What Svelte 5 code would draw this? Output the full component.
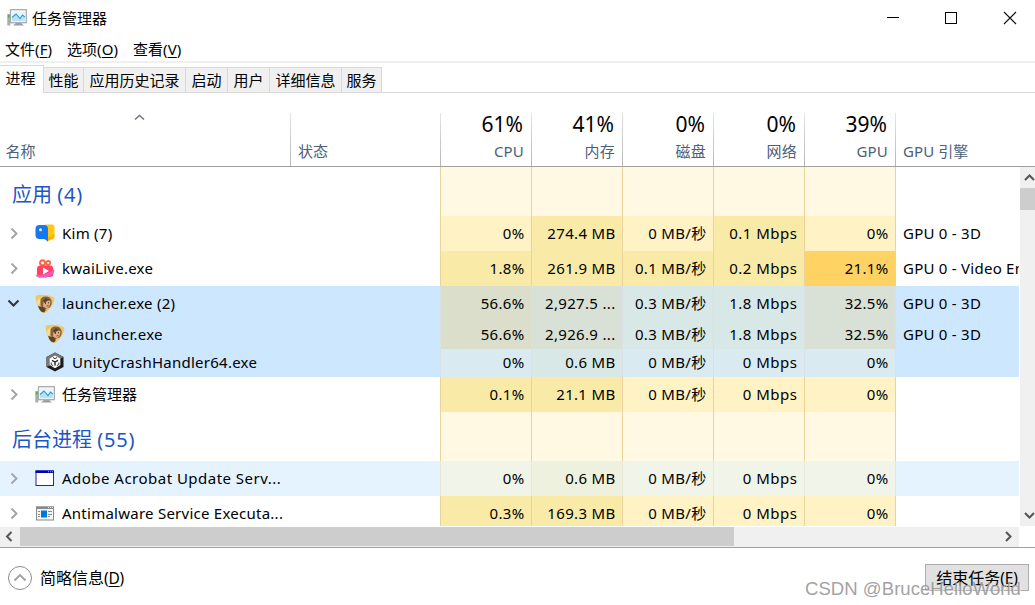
<script>
  const menus = [['文件', 'F', 48], ['选项', 'O', 52], ['查看', 'V', 50]];
  const tabs = [['进程', 44], ['性能', 40], ['应用历史记录', 102], ['启动', 42], ['用户', 42], ['详细信息', 72], ['服务', 40]];
  const totals = [['61%', 'CPU'], ['41%', '内存'], ['0%', '磁盘'], ['0%', '网络'], ['39%', 'GPU']];
  const rows = [
    { group: '应用', count: '(4)' },
    { name: 'Kim (7)', icon: 'kim', v: ['0%', '274.4 MB', '0 MB/秒', '0.1 Mbps', '0%'], heat: 'lmlml', gpu: 'GPU 0 - 3D' },
    { name: 'kwaiLive.exe', icon: 'kwai', v: ['1.8%', '261.9 MB', '0.1 MB/秒', '0.2 Mbps', '21.1%'], heat: 'mmmmh', gpu: 'GPU 0 - Video Encode' },
    { name: 'launcher.exe (2)', icon: 'launcher', open: true, selected: true, v: ['56.6%', '2,927.5 ...', '0.3 MB/秒', '1.8 Mbps', '32.5%'], heat: 'xymmy', gpu: 'GPU 0 - 3D' },
    { name: 'launcher.exe', icon: 'launcher', child: true, selected: true, v: ['56.6%', '2,926.9 ...', '0.3 MB/秒', '1.8 Mbps', '32.5%'], heat: 'xymmy', gpu: 'GPU 0 - 3D' },
    { name: 'UnityCrashHandler64.exe', icon: 'unity', child: true, selected: true, v: ['0%', '0.6 MB', '0 MB/秒', '0 Mbps', '0%'], heat: 'lmlll', gpu: '' },
    { name: '任务管理器', icon: 'task', v: ['0.1%', '21.1 MB', '0 MB/秒', '0 Mbps', '0%'], heat: 'mmlll', gpu: '' },
    { group: '后台进程', count: '(55)' },
    { name: 'Adobe Acrobat Update Serv...', icon: 'window', hover: true, wide: true, v: ['0%', '0.6 MB', '0 MB/秒', '0 Mbps', '0%'], heat: 'lmlll', gpu: '' },
    { name: 'Antimalware Service Executa...', icon: 'service', v: ['0.3%', '169.3 MB', '0 MB/秒', '0 Mbps', '0%'], heat: 'mmlll', gpu: '' }
  ];
</script>

{#snippet appIcon(kind)}
  <svg class="icon" width="20" height="20" viewBox="0 0 20 20">
    {#if kind === 'task'}
      <rect x="0.3" y="6" width="3" height="11.500" fill="#a9adb0" /><rect x="0.800" y="7" width="2" height="2.500" fill="#39c639" />
      <path d="M9 15h5l3 2.500H6z" fill="#9a9d9f" />
      <rect x="3.500" y="1.700" width="15.800" height="13" fill="#fff" stroke="#aaa" stroke-width="1.300" />
      <rect x="5" y="3.200" width="12.800" height="10" fill="#e6f6fe" />
      <path d="M5 10l4-3.500 4 4 2.500-3 2.300 2v3.700H5z" fill="#b7e2f8" />
      <path d="M5 9.500l4-3.500 4 4.500 2.500-3.500 2.300 2" fill="none" stroke="#3498c8" stroke-width="1.100" />
    {:else if kind === 'kim'}
      <path d="M10 .5h7q2.500 0 2.500 2.500V12q0 2.500-3 3l-5 1z" fill="#ffc814" />
      <path d="M12 14l7.500-4v2q0 3-3 3.500L12 17.500z" fill="#ffb000" />
      <path d="M4.500 1H9q4 0 4 4V17.500L9.500 15H4.500Q.5 15 .5 11V5q0-4 4-4z" fill="#1677ef" />
      <circle cx="5.500" cy="5.700" r="1.500" fill="#e4f2ff" />
    {:else if kind === 'kwai'}
      <circle cx="7.500" cy="3.700" r="2.500" fill="none" stroke="#ff6543" stroke-width="1.900" />
      <circle cx="13.200" cy="4" r="2" fill="none" stroke="#ff6543" stroke-width="1.800" />
      <path d="M5 6.500h10q3 0 3.200 3l.3 5q0 3.500-4 3.500H6q-4 0-4-3.500V10q0-3.500 3-3.500z" fill="#ff4264" />
      <path d="M.6 15.500Q10 17.500 18.500 10.500q2 1-.5 4-3 3.500-7 4.300H4q-3-1-3.400-3.300z" fill="#f65bc4" />
      <path d="M8 8.500l6 3.500-6 3.500z" fill="#fff" />
    {:else if kind === 'launcher'}
      <path d="M2 1.200Q10-.5 18.300 3q1.700 1 .7 4-2 7-8 11.500-3 1.500-5-1Q.5 10 .7 3q0-1.500 1.300-1.800z" fill="#edc768" />
      <path d="M5.500 8Q5 3 10 2.500q5-.5 6.500 4 1 4-2 7l-5 2-4-4z" fill="#8a5f3c" />
      <path d="M8.500 7.500l4-2 3 2-.8 4-2.700 3-4-2z" fill="#e3aa83" />
      <path d="M8 7l3-3 4 2-3 1-2 2.500zM3 12l5 1 3 3-2 2.500-3-1q-2-2-3-5.500z" fill="#58432f" />
      <path d="M10 9.300h1M13 8.800h1" stroke="#392a25" /><path d="M11.500 12l2-.5" stroke="#9e4038" />
      <path d="M2 7l3-3v4l-2 4z" fill="#f6df9b" />
    {:else if kind === 'unity'}
      <path d="M10 .5l8.500 4.500v10L10 19.500 1.500 15V5z" fill="#1c1c1c" />
      <path d="M1.500 5L10 .5 18.500 5 15 7l-5-3-5 3v6.500l-3.500 1.500z" fill="#777" />
      <path d="M10 3.500l5.300 3v6.500l-5.300 3.300-5.300-3.300V6.500z" fill="#fff" />
      <path d="M10 10v3.500M10 10L7 8.300M10 10l3-1.700" stroke="#222" stroke-width="1.400" />
      <path d="M8 5.500l2 1.200 2-1.200M6.200 10.500v2l2 1.200M13.800 10.500v2l-2 1.200" fill="none" stroke="#333" />
    {:else if kind === 'window'}
      <rect x="1" y="2" width="17.500" height="14.500" fill="#fff" stroke="#27278c" />
      <rect x=".5" y="1.500" width="18.500" height="2.500" fill="#0000b8" /><path d="M13 2.700h1m1 0h1m1 0h1" stroke="#83a7e8" />
    {:else}
      <rect x="1.500" y="3" width="17" height="13" fill="#f6f6f6" stroke="#858b8f" />
      <rect x="1" y="2.500" width="18" height="2.500" fill="#858b8f" /><path d="M13 3.500h1m1 0h1m1 0h1" stroke="#eee" />
      <rect x="6" y="6.500" width="6" height="7" fill="#0078d7" />
      <path d="M3 7.500h2M3 10.500h2M3 12.500h2M13 7.500h4M13 10.500h4M13 12.500h2" stroke="#8a8a8a" />
    {/if}
  </svg>
{/snippet}

<main>
  <header class="title">
    {@render appIcon('task')}
    <span>任务管理器</span>
    <svg class="controls" width="130" height="14" viewBox="0 0 130 14">
      <path d="M0 6.500h12" stroke="#000" /><rect x="58.500" y="1.500" width="11" height="11" fill="none" stroke="#000" />
      <path d="M117 1l12 12M129 1l-12 12" stroke="#111" stroke-width="1.100" />
    </svg>
  </header>
  <nav class="menu">
    {#each menus as [label, key, width]}<span style:width="{width}px">{label}<i>(<u>{key}</u>)</i></span>{/each}
  </nav>
  <nav class="tabs">
    {#each tabs as [label, width], i}<span class:active={i === 0} style:width="{width}px">{label}</span>{/each}
  </nav>
  <section class="head grid">
    <div class="namehead">
      <svg width="12" height="7" viewBox="0 0 12 7"><path d="M1 5.500l4.500-4 4.500 4" fill="none" stroke="#6b7189" stroke-width="1.500" /></svg>
      <small>名称</small>
    </div>
    <div class="line left"><small>状态</small></div>
    {#each totals as [value, label]}<div class="line total"><b>{value}</b><small>{label}</small></div>{/each}
    <div class="line left"><small class="latin">GPU 引擎</small></div>
  </section>
  <section class="body">
    <div class="rows">
      {#each rows as row}
        {#if row.group}
          <div class="row grid group">
            <div class="groupname">{row.group} <span>{row.count}</span></div><div></div>
            {#each totals as _}<div class="heat"></div>{/each}<div class="engine"></div>
          </div>
        {:else}
          <div class="row grid" class:child={row.child} class:selected={row.selected} class:hover={row.hover}>
            <div class="name">
              {#if !row.child}
                <svg class="chevron" width="12" height="12" viewBox="0 0 12 12">
                  {#if row.open}<path d="M.5 2.500l5 5 5-5" fill="none" stroke="#333" stroke-width="2" />
                  {:else}<path d="M3.500 .5l5 5-5 5" fill="none" stroke="#a3a3a3" stroke-width="1.900" />{/if}
                </svg>
              {/if}
              {@render appIcon(row.icon)}<span class:cjk={row.icon === 'task'} class:wide={row.wide}>{row.name}</span>
            </div>
            <div></div>
            {#each row.v as value, i}<div class="heat {row.heat[i]}" class:net={i === 3}>{value}</div>{/each}
            <div class="engine">{row.gpu}</div>
          </div>
        {/if}
      {/each}
    </div>
    <div class="vbar">
      <svg width="15" height="21" viewBox="0 0 15 21"><path d="M5 13l4.500-4.500L14 13" fill="none" stroke="#555" stroke-width="2" /></svg>
      <i></i>
      <svg width="15" height="21" viewBox="0 0 15 21"><path d="M5 8l4.500 4.500L14 8" fill="none" stroke="#555" stroke-width="2" /></svg>
    </div>
  </section>
  <div class="hbar">
    <svg width="20" height="19" viewBox="0 0 20 19"><path d="M11.500 5L7 9.500l4.500 4.500" fill="none" stroke="#555" stroke-width="2" /></svg>
    <i></i>
    <svg width="20" height="19" viewBox="0 0 20 19"><path d="M7 5l4.500 4.500L7 14" fill="none" stroke="#555" stroke-width="2" /></svg>
  </div>
  <footer>
    <svg width="26" height="26" viewBox="0 0 26 26"><circle cx="13" cy="13" r="11.500" fill="none" stroke="#8b8b8b" /><path d="M7.500 15.500L13 10l5.500 5.500" fill="none" stroke="#a0a0a0" stroke-width="1.800" /></svg>
    <span>简略信息<i>(<u>D</u>)</i></span>
    <button>结束任务<i>(<u>E</u>)</i></button>
    <div class="credit">CSDN @BruceHelloWorld</div>
  </footer>
</main>

<style>
  :global(body) { margin: 0; background: #fff; }
  * { box-sizing: border-box; }
  main { width: 1035px; height: 605px; overflow: hidden; background: #fff; color: #000; font: 15px/20px "Noto Sans", "Noto Sans CJK SC", sans-serif; white-space: nowrap; }
  i { font-style: normal; }
  u { text-underline-offset: 2px; text-decoration-thickness: 1px; }
  svg { display: block; flex: none; }
  .title { height: 36px; display: flex; align-items: center; padding: 0 18px 0 7px; }
  .title span { margin-left: 5px; }
  .controls { margin-left: auto; }
  .menu { height: 27px; display: flex; gap: 14px; padding: 3px 5px 0; border-bottom: 2px solid #f0f0f0; }
  .menu i { font-size: 15px; letter-spacing: .1px; }
  .tabs { height: 30px; display: flex; align-items: flex-end; background: linear-gradient(#d9d9d9, #d9d9d9) 0 100% / 100% 1px no-repeat; }
  .tabs span { height: 26px; border: 1px solid #d9d9d9; border-left: 0; background: #f0f0f0; text-align: center; line-height: 25px; }
  .tabs span.active { height: 28px; border-bottom: 0; background: #fff; line-height: 25px; padding-right: 2px; }
  .grid { display: grid; grid-template-columns: 290px 150px repeat(5, 91px) minmax(0, 1fr); }
  .head { height: 74px; padding-top: 20px; border-bottom: 1px solid #a0a0a0; }
  .head small { font-size: 15px; line-height: 20px; color: #4c607a; }
  .namehead { display: flex; flex-direction: column; justify-content: space-between; padding: 1px 0 5px 5.5px; }
  .namehead svg { margin-left: 128px; }
  .line { background: linear-gradient(#e5e5e5, #b5b5b5) 0 0 / 1px 100% no-repeat; display: flex; flex-direction: column; justify-content: flex-end; padding-bottom: 5px; }
  .left { padding-left: 8px; }
  .total { align-items: flex-end; padding-right: 7px; }
  .total b { font-weight: 400; font-size: 21px; line-height: 22px; margin-bottom: 6px; padding-right: 1px; }
  .total small { letter-spacing: .2px; }
  .left .latin { letter-spacing: .1px; }
  .body { display: flex; height: 359px; }
  .rows { width: 1019px; margin-right: 1px; overflow: hidden; }
  .row { height: 35px; line-height: 35px; }
  .child { height: 28px; line-height: 26px; }
  .group { height: 49px; }
  .groupname { padding: 3px 0 0 12px; font-size: 20px; line-height: 49px; color: #1c56c4; }
  .groupname span { letter-spacing: .8px; }
  .name { display: flex; align-items: center; padding-left: 8px; }
  .child .name { padding: 0 0 2px 45px; }
  .chevron { margin-right: 15px; }
  .name span { margin-left: 7px; letter-spacing: .25px; }
  .name .wide { letter-spacing: .48px; }
  .name .cjk { letter-spacing: 0; }
  .heat { background: #fff8e2; border-left: 1px solid #ebd49c; text-align: right; padding-right: 6.500px; letter-spacing: .32px; }
  .net { letter-spacing: .5px; }
  .engine { border-left: 1px solid #ebd49c; padding-left: 7px; overflow: hidden; letter-spacing: .25px; }
  .l { background: #fff3c5; }
  .m { background: #f9eba7; }
  .h { background: #ffd264; }
  .hover { background: #e5f3ff; }
  .hover .heat, .hover .engine { border-color: #e8e5db; }
  .hover .l { background: #f0f4e9; }
  .hover .m { background: #edf1dd; }
  .selected { background: #cde7ff; }
  .selected .heat, .selected .engine { border-color: #dbe0e4; }
  .selected .l { background: #d9eaf0; }
  .selected .m { background: #d7e8e7; }
  .selected .x { background: #dadecb; }
  .selected .y { background: #d9e0d5; }
  .vbar { width: 15px; background: #f0f0f0; display: flex; flex-direction: column; overflow: hidden; }
  .vbar i { height: 22px; background: #cdcdcd; margin-bottom: auto; }
  .hbar { width: 1019px; height: 20px; margin-top: 1px; background: #f0f0f0; display: flex; }
  .hbar i { width: 714px; height: 19px; background: #cdcdcd; margin-right: auto; }
  footer { position: relative; height: 58px; border-top: 1px solid #a0a0a0; display: flex; align-items: flex-start; padding: 17px 6px 0 7px; }
  footer span { margin: 3px 0 0 7px; font-size: 16px; }
  footer i { font-size: 15.500px; letter-spacing: -.2px; }
  button { margin: -1px 0 0 auto; width: 104px; height: 27px; padding: 0; border: 1px solid #adadad; background: #e1e1e1; color: #000; font: inherit; font-size: 16px; line-height: 24px; }
  .credit { position: absolute; left: 805px; top: 30px; font: 18.600px/22px "Liberation Sans", sans-serif; color: rgba(150, 150, 150, .9); text-shadow: 1px 1px 0 rgba(255, 255, 255, .6); }
</style>
